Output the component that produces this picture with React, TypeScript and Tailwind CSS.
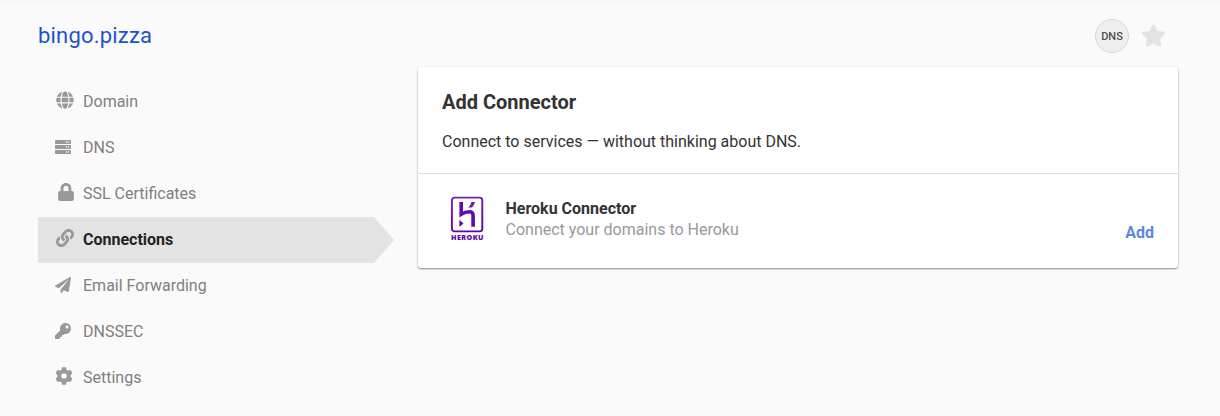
import type { IconType } from "react-icons";
import { FaCog, FaGlobe, FaKey, FaLink, FaLock, FaPaperPlane, FaServer, FaStar } from "react-icons/fa";

type NavItem = { label: string; icon: IconType; iconClass: string; active?: boolean };

const navItems: NavItem[] = [
  { label: "Domain", icon: FaGlobe, iconClass: "ml-[18px] mr-[9px] -mt-1 size-[18px]" },
  { label: "DNS", icon: FaServer, iconClass: "ml-[17px] mr-3 -mt-0.5 size-4" },
  { label: "SSL Certificates", icon: FaLock, iconClass: "ml-[19px] mr-2 -mt-1 size-[18px]" },
  { label: "Connections", icon: FaLink, iconClass: "ml-[18px] mr-[9px] -mt-1 size-[18px]", active: true },
  { label: "Email Forwarding", icon: FaPaperPlane, iconClass: "ml-[17px] mr-3 -mt-0.5 size-4" },
  { label: "DNSSEC", icon: FaKey, iconClass: "ml-[17px] mr-3 -mt-0.5 size-4" },
  { label: "Settings", icon: FaCog, iconClass: "ml-[17px] mr-2.5 -mt-1 size-[18px]" },
];

function Sidebar() {
  return (
    <nav className="flex w-[356px] shrink-0 flex-col pt-3">
      {navItems.map(({ label, icon: Icon, iconClass, active }) => (
        <a
          key={label}
          className={
            active
              ? "flex h-[46px] items-center bg-[#e3e3e3] font-bold text-[#222] [clip-path:polygon(0_0,336px_0,100%_50%,336px_100%,0_100%)]"
              : "flex h-[46px] items-center text-[#808080]"
          }
        >
          <Icon className={`${iconClass} shrink-0 text-[#999]`} />
          <span className="leading-6">{label}</span>
        </a>
      ))}
    </nav>
  );
}

function HerokuLogo() {
  return (
    <svg viewBox="0 0 34 46" className="h-[46px] w-[34px] shrink-0" role="img" aria-label="Heroku">
      <defs>
        <linearGradient id="heroku" x1="0" y1="0" x2="0.2" y2="1">
          <stop offset="0" stopColor="#7b1fb8" />
          <stop offset="1" stopColor="#5c06a6" />
        </linearGradient>
      </defs>
      <rect x="1.9" y="1.6" width="30.4" height="33.8" rx="2.6" fill="none" stroke="url(#heroku)" strokeWidth="1.9" />
      <path d="M11.2 6V18.2C13.6 16.7 16.7 15.7 19.4 15.7C22.2 15.7 23.1 17.2 23.1 19.4V30.8" fill="none" stroke="#6608ac" strokeWidth="3.6" />
      <path d="M9.4 23.8L13.5 27.5L9.4 31.1Z" fill="#6008aa" />
      <path d="M21.4 6H24.9C24.6 8.2 23.4 10.1 21.6 11.6H18.2C19.9 10 21 8.2 21.4 6Z" fill="#7412b2" />
      <text x="1" y="44.3" textLength="32.5" lengthAdjust="spacing" fill="#5c06a6" className="font-['Open_Sans',sans-serif] text-[7.2px] font-extrabold">HEROKU</text>
    </svg>
  );
}

function ConnectorCard() {
  return (
    <main className="ml-6 h-[201px] w-[760px] rounded-[3px] bg-white text-[#333] shadow-[0_1px_2px_rgba(0,0,0,0.45)]">
      <header className="h-[107px] border-b border-[#e0e0e0] px-6 pt-5">
        <h2 className="text-xl leading-[30px] font-bold">Add Connector</h2>
        <p className="mt-[13px] leading-6">Connect to services — without thinking about DNS.</p>
      </header>
      <div className="flex h-[94px] pr-6 pl-8">
        <div className="pt-[22px]">
          <HerokuLogo />
        </div>
        <div className="ml-[21.5px] flex-1 pt-6 leading-[21px]">
          <h3 className="font-bold">Heroku Connector</h3>
          <p className="text-[#999]">Connect your domains to Heroku</p>
        </div>
        <button className="mt-[47px] h-6 leading-6 font-bold text-[#5b87de]">Add</button>
      </div>
    </main>
  );
}

export default function App() {
  return (
    <div className="h-[416px] w-full overflow-hidden bg-[#fafafa] bg-linear-to-b from-[#f5f5f5] to-[#fafafa] bg-[length:100%_4px] bg-no-repeat font-[Roboto,sans-serif] text-base">
      <header className="flex h-[67px] items-start justify-between pr-[54px] pl-[38px]">
        <h1 className="mt-[21px] text-[22px] leading-[30px] tracking-[0.2px] text-[#1d53ca]">bingo.pizza</h1>
        <div className="mt-[19px] flex items-center gap-3">
          <span className="flex size-[34px] items-center justify-center rounded-full border border-[#d5d5d5] bg-[#efefef] pt-0.5 text-[11px] font-medium text-[#505050]">DNS</span>
          <FaStar className="-mt-0.5 size-[25px] text-[#e3e3e3]" />
        </div>
      </header>
      <div className="flex items-start pl-[38px]">
        <Sidebar />
        <ConnectorCard />
      </div>
    </div>
  );
}
